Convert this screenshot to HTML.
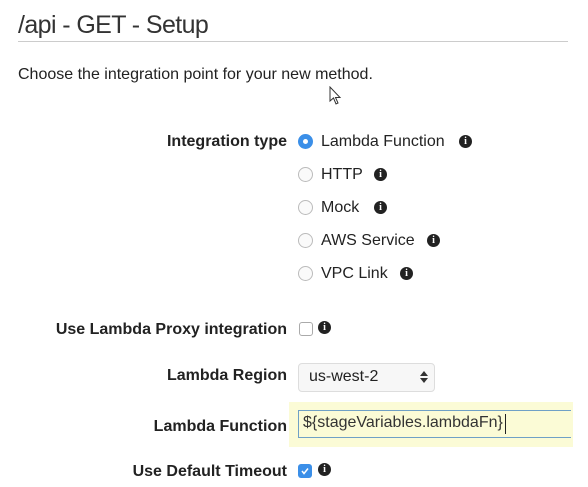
<!DOCTYPE html>
<html><head><style>
body{margin:0;width:588px;height:487px;background:#fff;font-family:"Liberation Sans",Arial,sans-serif;color:#222;position:relative;overflow:hidden}
.a{position:absolute;white-space:nowrap}
.t{left:18px;top:11px;font-size:25px;color:#333;letter-spacing:-0.6px}
.hr{left:18px;top:41px;width:550px;height:1px;background:#ccc}
.lbl{font-weight:bold;font-size:16px;right:301px;text-align:right}
.rad{width:13px;height:13px;border:1px solid #bbb;border-radius:50%;background:#fafafa}
.sel{width:15px;height:15px;border-radius:50%;background:#3b8fe8}
.sel:after{content:"";position:absolute;left:5px;top:5px;width:5px;height:5px;border-radius:50%;background:#fff}
.opt{font-size:16px;color:#222}
.i{width:13px;height:13px;border-radius:50%;background:#222;color:#fff;font:bold 10px "Liberation Serif",serif;text-align:center;line-height:13px}
.cb{width:12px;height:12px;border:1px solid #aaa;border-radius:3px;background:#fff}
</style></head><body>
<div class="a t">/api - GET - Setup</div>
<div class="a hr"></div>
<div class="a" style="left:18px;top:66px;font-size:16px">Choose the integration point for your new method.</div>
<svg class="a" style="left:329px;top:86px" width="14" height="20" viewBox="0 0 14 20"><path d="M1 1 L1 15 L4.5 12 L7 18 L9 17 L6.5 11.5 L11 11.5 Z" fill="#fff" stroke="#333" stroke-width="1"/></svg>

<div class="a lbl" style="top:133px">Integration type</div>
<div class="a sel" style="left:298px;top:134px"></div>
<div class="a opt" style="left:321px;top:133px">Lambda Function</div>
<div class="a i" style="left:459px;top:135px">i</div>

<div class="a rad" style="left:298px;top:167px"></div>
<div class="a opt" style="left:321px;top:166px">HTTP</div>
<div class="a i" style="left:374px;top:168px">i</div>

<div class="a rad" style="left:298px;top:200px"></div>
<div class="a opt" style="left:321px;top:199px">Mock</div>
<div class="a i" style="left:374px;top:201px">i</div>

<div class="a rad" style="left:298px;top:233px"></div>
<div class="a opt" style="left:321px;top:232px">AWS Service</div>
<div class="a i" style="left:427px;top:234px">i</div>

<div class="a rad" style="left:298px;top:266px"></div>
<div class="a opt" style="left:321px;top:265px">VPC Link</div>
<div class="a i" style="left:400px;top:267px">i</div>

<div class="a lbl" style="top:321px">Use Lambda Proxy integration</div>
<div class="a cb" style="left:299px;top:322px"></div>
<div class="a i" style="left:318px;top:321px">i</div>

<div class="a lbl" style="top:367px">Lambda Region</div>
<div class="a" style="left:298px;top:363px;width:135px;height:27px;border:1px solid #ddd;border-radius:4px;background:#f7f7f7"></div>
<div class="a opt" style="left:309px;top:368px">us-west-2</div>
<svg class="a" style="left:420px;top:370px" width="8" height="14" viewBox="0 0 8 14"><path d="M0 6 L4 1 L8 6 Z M0 8 L4 13 L8 8 Z" fill="#333"/></svg>

<div class="a" style="left:289px;top:402px;width:284px;height:45px;background:#fbfbd6"></div>
<div class="a lbl" style="top:418px">Lambda Function</div>
<div class="a" style="left:298px;top:410px;width:272px;height:26px;border:1px solid #6fa0c6;border-right:none;background:#fbfbd6"></div>
<div class="a opt" style="left:303px;top:414px;color:#333">${stageVariables.lambdaFn}</div>
<div class="a" style="left:505px;top:414px;width:1px;height:20px;background:#222"></div>

<div class="a lbl" style="top:463px">Use Default Timeout</div>
<div class="a" style="left:298px;top:464px;width:14px;height:14px;border-radius:3px;background:#3b8fe8"></div>
<svg class="a" style="left:300px;top:466px" width="10" height="10" viewBox="0 0 10 10"><path d="M2 5 L4 7.5 L8 2.5" fill="none" stroke="#fff" stroke-width="1.5"/></svg>
<div class="a i" style="left:318px;top:463px">i</div>
</body></html>
